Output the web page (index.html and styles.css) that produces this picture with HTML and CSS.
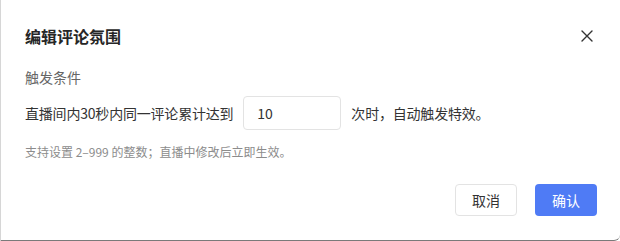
FILE: index.html
```html
<!DOCTYPE html>
<html>
<head>
    <meta content="text/html; charset=utf-8" http-equiv="Content-Type">
    <title>编辑评论氛围</title>
    <link rel="stylesheet" href="styles.css">
</head>

<body>
    <div class="dialog">
        <div class="dialog-header">
            <h1>编辑评论氛围</h1>
            <button class="close-button" aria-label="关闭">
                <svg width="12" height="12" viewBox="0 0 12 12">
                    <path d="M1 1 L11 11 M11 1 L1 11" stroke="#333" stroke-width="1.4" stroke-linecap="round" fill="none"/>
                </svg>
            </button>
        </div>

        <div class="dialog-body">
            <div class="section-label">触发条件</div>
            <div class="trigger-row">
                <span>直播间内30秒内同一评论累计达到</span>
                <input type="text" class="count-input" value="10">
                <span>次时，自动触发特效。</span>
            </div>
            <div class="hint">支持设置 2–999 的整数；直播中修改后立即生效。</div>
        </div>

        <div class="dialog-footer">
            <button class="btn btn-cancel">取消</button>
            <button class="btn btn-primary">确认</button>
        </div>
    </div>
</body>
</html>
```

FILE: styles.css
```css
body {
    font-family: "Noto Sans CJK SC", "Noto Sans", sans-serif;
    margin: 0;
    background: #ffffff;
    color: #333333;
    width: 620px;
    height: 241px;
    overflow: hidden;
}

.dialog {
    box-sizing: border-box;
    width: 620px;
    height: 241px;
    padding: 24px 23px 0 24px;
    background: #ffffff;
    border-left: 1px solid #d6d6d6;
    border-bottom: 1px solid #7a7a7a;
    border-radius: 0 0 6px 0;
    display: flex;
    flex-direction: column;
}

.dialog-header {
    display: flex;
    justify-content: space-between;
    align-items: center;
    height: 24px;
}

h1 {
    margin: 0;
    font-size: 16px;
    line-height: 24px;
    font-weight: 600;
    color: #262626;
}

.close-button {
    background: none;
    border: none;
    padding: 0;
    margin-right: 4px;
    width: 12px;
    height: 12px;
    display: flex;
    cursor: pointer;
}

.dialog-body {
    padding-top: 18px;
}

.section-label {
    font-size: 14px;
    line-height: 22px;
    color: #666666;
}

.trigger-row {
    display: flex;
    align-items: center;
    gap: 10px;
    margin-top: 8px;
    font-size: 14px;
    color: #333333;
    letter-spacing: -0.2px;
}

.count-input {
    box-sizing: border-box;
    width: 98px;
    height: 34px;
    padding: 0 13px;
    border: 1px solid #e3e3e3;
    border-radius: 4px;
    font-family: inherit;
    font-size: 14px;
    color: #333333;
    outline: none;
}

.hint {
    margin-top: 12px;
    font-size: 12px;
    line-height: 20px;
    color: #8c8c8c;
}

.dialog-footer {
    display: flex;
    justify-content: flex-end;
    gap: 18px;
    margin-top: 22px;
}

.btn {
    box-sizing: border-box;
    width: 62px;
    height: 32px;
    border-radius: 4px;
    font-family: inherit;
    font-size: 14px;
    cursor: pointer;
}

.btn-cancel {
    background: #ffffff;
    border: 1px solid #e3e3e3;
    color: #333333;
}

.btn-primary {
    background: #4f7bf5;
    border: none;
    color: #ffffff;
}
```
